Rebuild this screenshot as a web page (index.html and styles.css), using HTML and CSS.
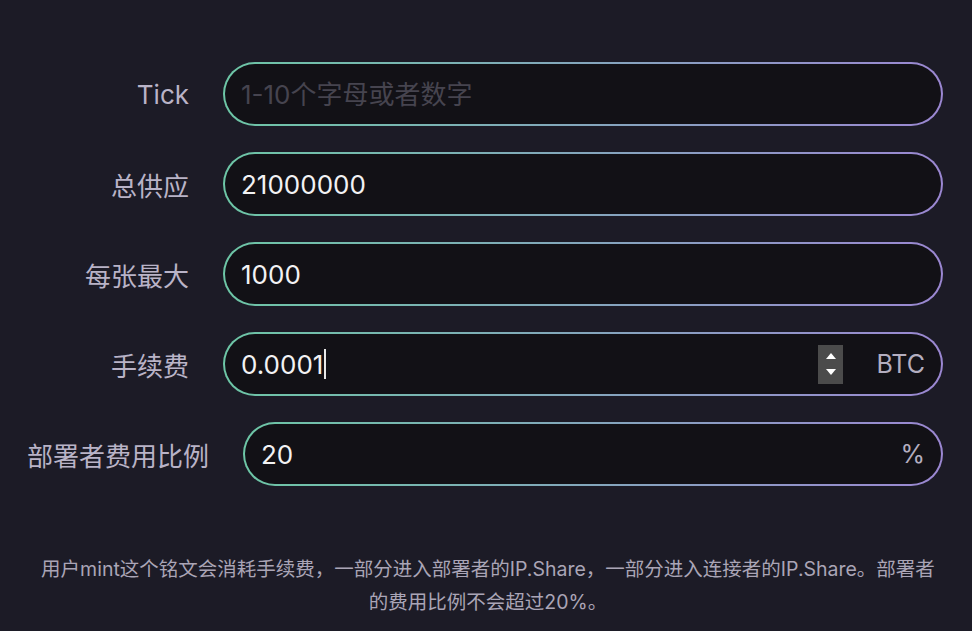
FILE: index.html
```html
<!DOCTYPE html>
<html lang="zh">
<head>
<meta charset="utf-8">
<title>Deploy</title>
<link rel="stylesheet" href="styles.css">
</head>
<body>
<main class="form">
  <div class="row">
    <label class="label">Tick</label>
    <div class="field"><input class="input" type="text" placeholder="1-10个字母或者数字"></div>
  </div>
  <div class="row">
    <label class="label">总供应</label>
    <div class="field"><input class="input" type="text" value="21000000"></div>
  </div>
  <div class="row">
    <label class="label">每张最大</label>
    <div class="field"><input class="input" type="text" value="1000"></div>
  </div>
  <div class="row">
    <label class="label">手续费</label>
    <div class="field">
      <div class="value">0.0001<span class="caret"></span></div>
      <div class="spinner"><span class="tri up"></span><span class="tri down"></span></div>
      <span class="suffix btc">BTC</span>
    </div>
  </div>
  <div class="row">
    <label class="label">部署者费用比例</label>
    <div class="field"><input class="input" type="text" value="20"><span class="suffix">%</span></div>
  </div>
  <p class="note">用户mint这个铭文会消耗手续费，一部分进入部署者的IP.Share，一部分进入连接者的IP.Share。部署者的费用比例不会超过20%。</p>
</main>
</body>
</html>
```
FILE: styles.css
```css
html, body {
  margin: 0;
  padding: 0;
  background: #1c1b26;
}
body {
  font-family: Inter, "Noto Sans CJK SC", sans-serif;
}
.form {
  padding: 62px 29px 0 27px;
  display: flex;
  flex-direction: column;
  gap: 26px;
}
.row {
  display: flex;
  align-items: center;
  gap: 34px;
}
.label {
  min-width: 162px;
  text-align: right;
  flex-shrink: 0;
  font-size: 26px;
  color: #b9b3c7;
  white-space: nowrap;
}
.field {
  flex: 1;
  height: 64px;
  box-sizing: border-box;
  border: 2px solid transparent;
  border-radius: 32px;
  background:
    linear-gradient(#121116, #121116) padding-box,
    linear-gradient(90deg, #6dc6a6, #9b87d2) border-box;
  display: flex;
  align-items: center;
  padding: 0 16px 0 16px;
}
.input {
  flex: 1;
  min-width: 0;
  border: 0;
  outline: none;
  background: transparent;
  font-family: Inter, "Noto Sans CJK SC", sans-serif;
  font-size: 26px;
  color: #f2f2f4;
  padding: 0;
}
.input::placeholder {
  color: #46444f;
}
.value {
  flex: 1;
  font-size: 26px;
  color: #f2f2f4;
  display: flex;
  align-items: center;
}
.caret {
  display: inline-block;
  width: 2px;
  height: 30px;
  background: #e8e8e8;
  margin-left: 1px;
}
.spinner {
  width: 25px;
  height: 39px;
  background: #4b4b4b;
  display: flex;
  flex-direction: column;
  align-items: center;
  justify-content: center;
  gap: 10px;
  margin-right: 33px;
}
.tri {
  width: 0;
  height: 0;
  border-left: 5px solid transparent;
  border-right: 5px solid transparent;
}
.tri.up {
  border-bottom: 6px solid #ffffff;
}
.tri.down {
  border-top: 6px solid #ffffff;
}
.suffix {
  font-size: 25px;
  color: #b4aec0;
}
.note {
  margin: 41px 4px 0 10px;
  padding: 0;
  text-align: center;
  font-family: Inter, "Noto Sans CJK SC", sans-serif;
  font-size: 19.5px;
  line-height: 33px;
  color: #aaa5b6;
}
```
